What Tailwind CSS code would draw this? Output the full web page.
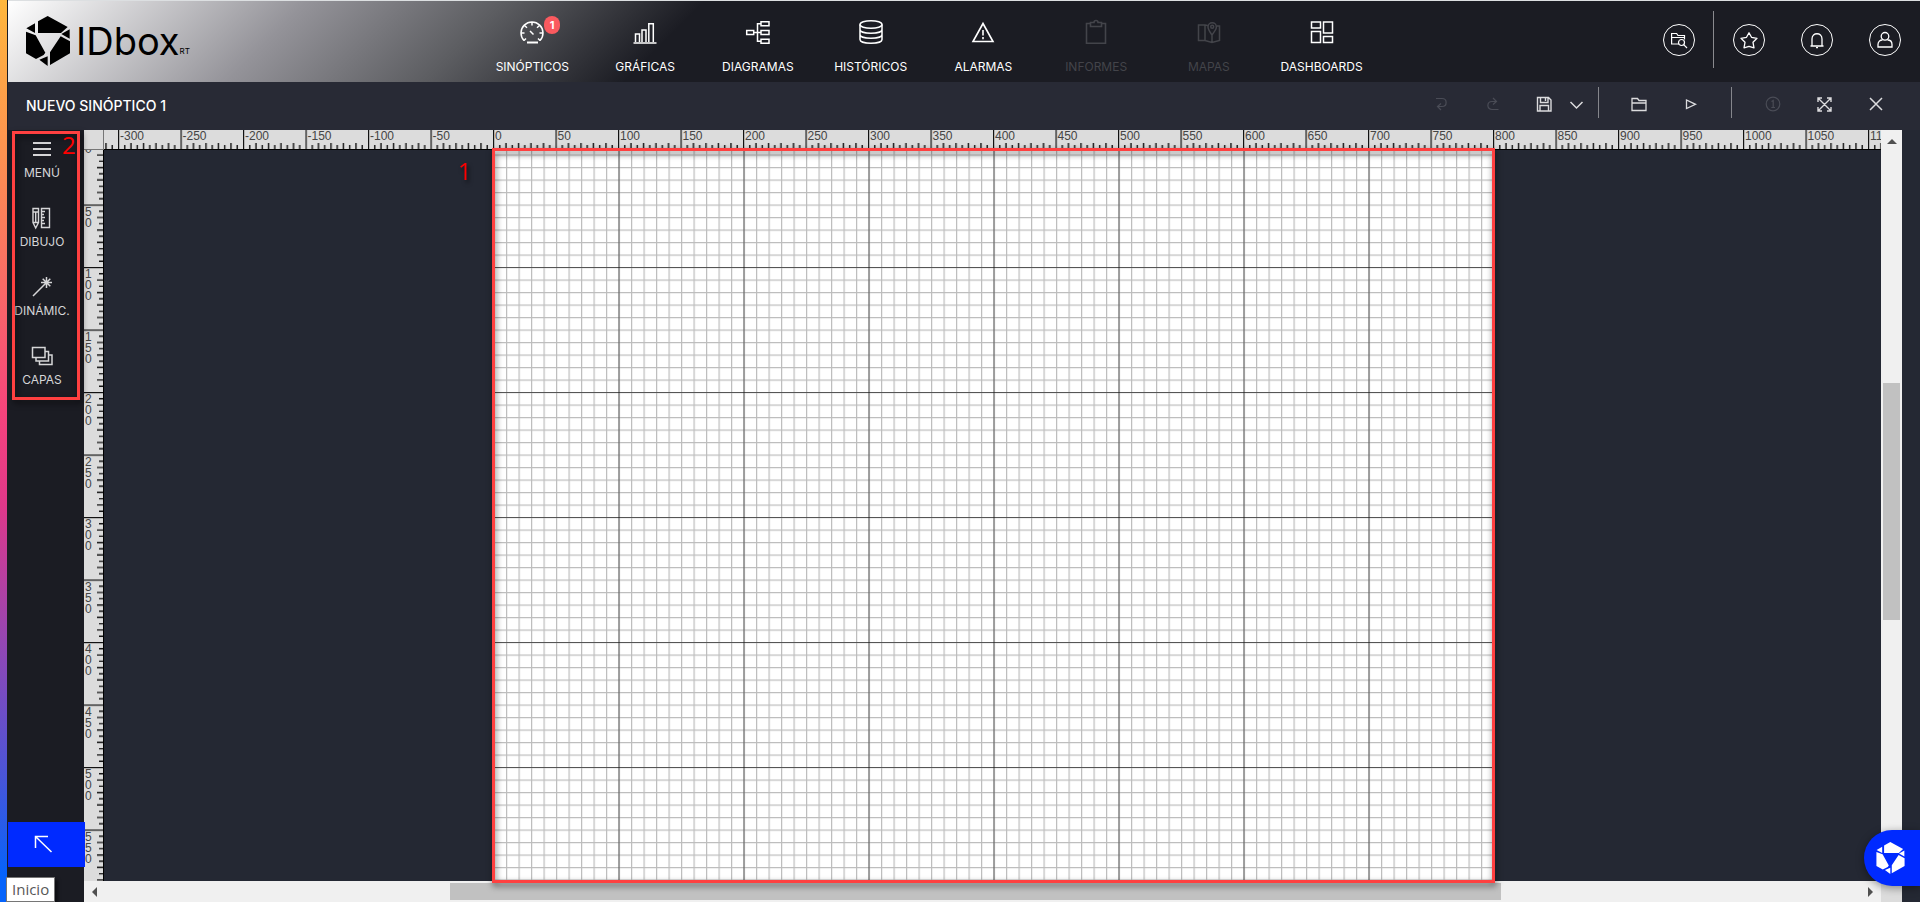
<!DOCTYPE html>
<html lang="es">
<head>
<meta charset="utf-8">
<title>IDbox RT - Nuevo sinóptico 1</title>
<script src="https://cdn.jsdelivr.net/npm/@tailwindcss/browser@4"></script>
</head>
<body class="flex h-screen overflow-hidden bg-[#242833] font-['Inter',sans-serif] text-white">
<svg class="hidden">
  <symbol id="logo" viewBox="78 51 132 150">
    <path fill="currentColor" d="M143 51 203 84 183 102H114V67ZM79 88 105 73V102ZM78 98 107 109 136 161 131 168 108 180 78 163ZM118 182 143 172V201ZM182 112 210 127V163L150 198V160ZM209 91V119L184 105Z"/>
  </symbol>
</svg>

<div class="w-2 shrink-0 border-r border-[#1b1c23] bg-[linear-gradient(180deg,#ffb73d_0%,#fd9250_17%,#f5437c_46%,#e0388a_56%,#9a45b0_70%,#4a55d8_86%,#0563fb_97%)]"></div>

<div class="flex min-w-0 flex-1 flex-col border-t border-[#dcdfe1]">
  <header class="flex h-[81px] shrink-0 bg-[linear-gradient(135deg,#fff_0%,#949399_15%,#5c5d61_25%,#1b1c23_35%)]">
    <a href="#" aria-label="IDbox RT" class="flex h-20 w-[468px] shrink-0 items-center pl-[18px] text-black">
      <svg class="h-[50px] w-11"><use href="#logo"/></svg>
      <span class="ml-[6px] text-[38px] leading-[50px]">IDbox</span><span class="mt-5 text-[8px]">RT</span>
    </a>
    <nav class="grid w-[902px] shrink-0 grid-cols-8 text-xs">
      <a href="#" class="relative flex flex-col items-center gap-3 pt-[18px]">
        <svg class="size-[26px]" viewBox="0 0 26 26" fill="none" stroke="currentColor" stroke-width="1.5"><path d="M5 21.500A11 11 0 1 1 21 21.500M13 2.500v4M2 14h3.500M24 14h-3.500M5.500 6.500l2.500 2.200M20.500 6.500 18 8.700M5 21.500l2-2M21 21.500l-2-2M11 12l3.500 3.500"/><path d="M8 23.500h11" stroke-width="2"/></svg>
        <span class="leading-5">SINÓPTICOS</span>
        <span class="absolute top-[15px] left-[68px] flex h-[18px] w-4 items-center justify-center rounded-full bg-[#fa5a5f] text-[11px] font-bold">1</span>
      </a>
      <a href="#" class="flex flex-col items-center gap-3 pt-[18px]">
        <svg class="size-[26px]" viewBox="0 0 26 26" fill="none" stroke="currentColor" stroke-width="1.5"><path d="M1.500 24h23M3.500 23v-8h4v8M10 23V11h4v12M16.800 23V4.700h4.500V23"/></svg>
        <span class="leading-5">GRÁFICAS</span>
      </a>
      <a href="#" class="flex flex-col items-center gap-3 pt-[18px]">
        <svg class="size-[26px]" viewBox="0 0 26 26" fill="none" stroke="currentColor" stroke-width="1.500"><path d="M1.700 11.500h7v4h-7zM16 2.800h8v4h-8zM16 11.500h8v4h-8zM16 20.200h8v4h-8zM8.700 13.500H16M16 4.800h-3.500v17.400H16"/></svg>
        <span class="leading-5">DIAGRAMAS</span>
      </a>
      <a href="#" class="flex flex-col items-center gap-3 pt-[18px]">
        <svg class="size-[26px]" viewBox="0 0 26 26" fill="none" stroke="currentColor" stroke-width="1.5"><ellipse cx="13" cy="5.500" rx="11" ry="3.800"/><path d="M2 5.500v15c0 5 22 5 22 0v-15M2 10.500c0 5 22 5 22 0M2 15.500c0 5 22 5 22 0"/></svg>
        <span class="leading-5">HISTÓRICOS</span>
      </a>
      <a href="#" class="flex flex-col items-center gap-3 pt-[18px]">
        <svg class="size-[26px]" viewBox="0 0 26 26" fill="none" stroke="currentColor" stroke-width="1.600"><path d="M13 4.500 23 22.500H3ZM13 11v5.500M13 18v2.200"/></svg>
        <span class="leading-5">ALARMAS</span>
      </a>
      <a href="#" aria-disabled="true" class="flex flex-col items-center gap-3 pt-[18px] text-[#43444a]">
        <svg class="size-[26px]" viewBox="0 0 26 26" fill="none" stroke="currentColor" stroke-width="1.600"><path d="M8 4.500H3.500v19.700h19V4.500H18M7.500 7.500v-4H11a2 2 0 0 1 4 0h3.500v4z"/></svg>
        <span class="leading-5">INFORMES</span>
      </a>
      <a href="#" aria-disabled="true" class="flex flex-col items-center gap-3 pt-[18px] text-[#43444a]">
        <svg class="size-[26px]" viewBox="0 0 26 26" fill="none" stroke="currentColor" stroke-width="1.500"><path d="M11.500 6.500 9 6H2.500v15.500H9l7 2 7.500-2V7H21M9 6v15.500M16 15v8.500M16 16c-2-3-4-5.500-4-8a4.200 4.200 0 0 1 8.400 0c0 2.500-2.400 5-4.400 8Z"/><circle cx="16.200" cy="7.700" r="1.500"/></svg>
        <span class="leading-5">MAPAS</span>
      </a>
      <a href="#" class="flex flex-col items-center gap-3 pt-[18px]">
        <svg class="size-[26px]" viewBox="0 0 26 26" fill="none" stroke="currentColor" stroke-width="1.500"><path d="M2.500 3h9v6h-9zM14.500 3h9v11h-9zM2.500 12.500h9v11h-9zM14.500 17.500h9v6h-9z"/></svg>
        <span class="leading-5">DASHBOARDS</span>
      </a>
    </nav>
    <div class="ml-auto flex h-[77px] items-center pr-[19px]">
      <button aria-label="Explorar" class="flex size-8 items-center justify-center rounded-full border border-white">
        <svg class="size-[18px]" viewBox="0 0 18 18" fill="none" stroke="currentColor" stroke-width="1.200"><path d="M9 13H1.600V2.500h5L8 4.500h6.500v4M1.600 6.500h13"/><circle cx="11.500" cy="11.500" r="3"/><path d="m13.700 13.700 3.300 3.300"/></svg>
      </button>
      <span class="ml-[18px] h-[57px] w-px bg-[#8a8a8e]"></span>
      <button aria-label="Favoritos" class="ml-[19px] flex size-8 items-center justify-center rounded-full border border-white">
        <svg class="size-[18px]" viewBox="0 0 18 18" fill="none" stroke="currentColor" stroke-width="1.300" stroke-linejoin="round"><path d="m9 1.800 2.500 4.500 5.500 1-4 4 1 5.500-5-1.500-5 1.500 1-5.500-4-4 5.500-1Z"/></svg>
      </button>
      <button aria-label="Notificaciones" class="ml-9 flex size-8 items-center justify-center rounded-full border border-white">
        <svg class="size-[18px]" viewBox="0 0 18 18" fill="none" stroke="currentColor" stroke-width="1.300"><path d="M2.500 15h13M4 15V8c0-7 10-7 10 0v7"/><path d="M8 16.600h2"/></svg>
      </button>
      <button aria-label="Usuario" class="ml-9 flex size-8 items-center justify-center rounded-full border border-white">
        <svg class="size-[18px]" viewBox="0 0 18 18" fill="none" stroke="currentColor" stroke-width="1.300"><circle cx="9" cy="5.300" r="3.800"/><path d="M6.500 9C4 9 2 10.500 2 13.500V16h14v-2.500C16 10.500 14 9 11.500 9"/></svg>
      </button>
    </div>
  </header>

  <div class="flex h-12 shrink-0 items-center bg-[#282a35] pr-[34px] pl-[18px] text-[#dcdcde]">
    <h1 class="mr-auto text-sm font-medium text-white">NUEVO SINÓPTICO 1</h1>
    <div class="flex h-full items-center pb-1">
      <button aria-label="Deshacer" class="text-[#4a4c56]"><svg class="size-5" viewBox="0 0 20 20" fill="none" stroke="currentColor" stroke-width="1.200"><path d="M5 4.500h6c5.500 0 5.500 8 0 8H7M10 9.500l-3.500 3 3.500 3.500"/></svg></button>
      <button aria-label="Rehacer" class="ml-8 text-[#4a4c56]"><svg class="size-5" viewBox="0 0 20 20" fill="none" stroke="currentColor" stroke-width="1.200"><path d="M15.500 15.500H9c-5.500 0-5.500-8 0-8h4M10 4l3.500 3.500-3.500 3"/></svg></button>
      <button aria-label="Guardar" class="ml-[31px]"><svg class="size-5" viewBox="0 0 20 20" fill="none" stroke="currentColor" stroke-width="1.400"><path d="M3.500 3.500h11L17 6v11H3.500zM6.500 3.500v5h7.500v-5M11.500 4v3M6 17v-5.500h8.500V17"/></svg></button>
      <button aria-label="Opciones de guardado" class="ml-3"><svg class="size-5" viewBox="0 0 20 20" fill="none" stroke="currentColor" stroke-width="1.500"><path d="m4.500 8 6 6 6-6"/></svg></button>
      <span class="mb-1 ml-3 h-[31px] w-px bg-[#85868c]"></span>
      <button aria-label="Abrir" class="ml-[30px]"><svg class="size-5" viewBox="0 0 20 20" fill="none" stroke="currentColor" stroke-width="1.300"><path d="M3 16.500v-12h5.500L10 6.500h7v10zM3 9h14"/></svg></button>
      <button aria-label="Ejecutar" class="ml-8"><svg class="size-5" viewBox="0 0 20 20" fill="none" stroke="currentColor" stroke-width="1.300"><path d="M5.500 6v8.500l9-4.200Z"/></svg></button>
      <span class="mb-1 ml-[30px] h-[31px] w-px bg-[#85868c]"></span>
      <button aria-label="Información" class="ml-[31px] text-[#4a4c56]"><svg class="size-5" viewBox="0 0 20 20" fill="none" stroke="currentColor" stroke-width="1.200"><circle cx="10" cy="10" r="6.800"/><path d="M8.500 7.500l1.700-1v7M8.300 13.500h3.700"/></svg></button>
      <button aria-label="Pantalla completa" class="ml-[31px]"><svg class="size-5" viewBox="0 0 20 20" fill="none" stroke="currentColor" stroke-width="1.400"><path d="m4.500 4.500 12 12M16.500 4.500l-12 12M4 8V4h4M13 4h4v4M17 13v4h-4M8 17H4v-4"/></svg></button>
      <button aria-label="Cerrar" class="ml-8"><svg class="size-5" viewBox="0 0 20 20" fill="none" stroke="currentColor" stroke-width="1.500"><path d="m4 4 12 12M16 4 4 16"/></svg></button>
    </div>
  </div>

  <div class="flex min-h-0 flex-1">
    <aside class="relative flex w-[76px] shrink-0 flex-col bg-[#1b1c23] text-xs text-[#d6d6d8]">
      <button class="flex h-[69px] w-[68px] flex-col items-center gap-1 pt-[7px]">
        <svg class="size-6" viewBox="0 0 24 24" stroke="currentColor" stroke-width="2"><path d="M3 6h18M3 12h18M3 18h18"/></svg>
        <span class="leading-4">MENÚ</span>
      </button>
      <button class="flex h-[69px] w-[68px] flex-col items-center gap-1 pt-[7px]">
        <svg class="size-6" viewBox="0 0 24 24" fill="none" stroke="currentColor" stroke-width="1.400"><path d="M3 2.500h5.500v14L5.700 22 3 16.500zM3 6h5.500M3 16.500h5.500M5.700 6v10.500M11.500 2.500h8v19h-8zM12 5.500h3M12 8.500h2M12 11.500h3M12 14.500h2M12 17.500h3"/></svg>
        <span class="leading-4">DIBUJO</span>
      </button>
      <button class="flex h-[69px] w-[68px] flex-col items-center gap-1 pt-[7px]">
        <svg class="size-6" viewBox="0 0 24 24" fill="none" stroke="currentColor" stroke-width="1.500"><path d="M3 21 15 9M16.500 2v11M11 7.500h11M12.700 3.700l7.600 7.600M20.300 3.700 15 9"/></svg>
        <span class="leading-4 whitespace-nowrap">DINÁMIC.</span>
      </button>
      <button class="flex h-[69px] w-[68px] flex-col items-center gap-1 pt-[7px]">
        <svg class="size-6" viewBox="0 0 24 24" fill="none" stroke="currentColor" stroke-width="1.500"><path d="M2.500 3.500h12.500v10H2.500zM15 7.500h3.500v9.500H6v-3M18.500 11H22v9.500H9.500V17"/></svg>
        <span class="leading-4">CAPAS</span>
      </button>
      <button aria-label="Volver" class="z-10 mt-auto mb-[35px] flex h-[45px] w-[77px] items-center justify-center bg-[#002aff] pr-2 text-white">
        <svg class="size-6" viewBox="0 0 24 24" fill="none" stroke="currentColor" stroke-width="1.500"><path d="M4.500 15V3.500H17M4.500 3.500l16 15.500"/></svg>
      </button>
      <div class="pointer-events-none absolute top-px left-1 h-[269px] w-[68px] border-3 border-[#ff4040] drop-shadow-[2px_3px_3px_rgba(0,0,0,0.6)]"></div>
      <span class="absolute top-[2px] left-[54px] font-['Open_Sans',sans-serif] text-2xl leading-[26px] text-[#f00]">2</span>
      <div role="tooltip" class="absolute bottom-0 -left-[2px] z-20 border border-[#767676] bg-white px-[5px] font-['Open_Sans',sans-serif] text-[15px] leading-[23px] text-[#575757] shadow-[3px_3px_3px_rgba(0,0,0,0.5)]">Inicio</div>
    </aside>

    <main class="grid min-w-0 flex-1 grid-cols-[20px_minmax(0,1fr)_21px] grid-rows-[20px_minmax(0,1fr)_21px] pr-[18px]">
      <div class="border-r border-b border-r-[#777] border-b-[#777] bg-[#dcdcdc]"></div>
      <svg id="ruler-x" class="h-5 w-full bg-[#dcdcdc] font-['Liberation_Sans',sans-serif] text-xs">
        <defs><pattern id="ticks-x" x="389" width="62.500" height="20" patternUnits="userSpaceOnUse">
          <path d="M.600 0v20" stroke="#111" stroke-width="1.200"/><path d="M6.750 15v5M19.250 15v5M31.750 15v5M44.250 15v5M56.750 15v5M13 13v7M25.500 13v7M38 13v7M50.500 13v7" stroke="#111" stroke-width="1.400"/>
        </pattern></defs>
        <rect width="100%" height="20" fill="url(#ticks-x)"/><path d="M0 19.500h4000" stroke="#000"/>
      </svg>
      <div class="row-span-2 flex flex-col items-center bg-[#f0f0f0] pt-[9px]">
        <svg class="h-[5px] w-[10px]" viewBox="0 0 10 5"><path d="m5 0 5 5H0z" fill="#505050"/></svg>
        <div class="mt-[239px] h-[237px] w-[17px] bg-[#c1c1c1]"></div>
      </div>
      <svg id="ruler-y" class="h-full w-5 bg-[#dcdcdc] font-['Liberation_Sans',sans-serif] text-xs">
        <defs><pattern id="ticks-y" y="-8" width="20" height="62.500" patternUnits="userSpaceOnUse">
          <path d="M0 .600h20" stroke="#111" stroke-width="1.200"/><path d="M15 6.750h5M15 19.250h5M15 31.750h5M15 44.250h5M15 56.750h5M13 13h7M13 25.500h7M13 38h7M13 50.500h7" stroke="#111" stroke-width="1.400"/>
        </pattern></defs>
        <rect width="20" height="100%" fill="url(#ticks-y)"/><path d="M19.500 0v4000" stroke="#000"/>
      </svg>
      <div class="flex min-w-0 bg-[#242833]">
        <span class="w-[389px] shrink-0 pt-2 pl-[354px] font-['Open_Sans',sans-serif] text-2xl leading-[26px] text-[#f00] drop-shadow-[2px_3px_2px_rgba(0,0,0,0.6)]">1</span>
        <div class="relative z-10 w-[1001px] shrink-0">
          <svg class="h-full w-full bg-white">
            <defs>
              <pattern id="minor" x=".5" y="-8" width="12.500" height="12.500" patternUnits="userSpaceOnUse"><path d="M.600 0v12.500M0 .600h12.500" stroke="#000" stroke-width="1.200" stroke-opacity=".26"/></pattern>
              <pattern id="major" x=".5" y="-8" width="125" height="125" patternUnits="userSpaceOnUse"><path d="M.5 0v125M0 .5h125" stroke="#000" stroke-opacity=".55"/></pattern>
            </defs>
            <rect width="100%" height="100%" fill="url(#minor)"/><rect width="100%" height="100%" fill="url(#major)"/>
          </svg>
          <div class="pointer-events-none absolute -top-[2px] -right-px -bottom-[2px] -left-px border-3 border-[#ff4040] drop-shadow-[1px_3px_3px_rgba(0,0,0,0.6)]"></div>
        </div>
      </div>
      <div class="col-span-2 flex items-center bg-[#f0f0f0]">
        <svg class="ml-2 h-[10px] w-[5px]" viewBox="0 0 5 10"><path d="M5 0v10L0 5z" fill="#505050"/></svg>
        <div class="ml-[353px] h-[17px] w-[1051px] bg-[#c1c1c1]"></div>
        <svg class="mr-2 ml-auto h-[10px] w-[5px]" viewBox="0 0 5 10"><path d="M0 0v10l5-5z" fill="#505050"/></svg>
      </div>
      <div class="bg-[#dcdcdc]"></div>
    </main>
  </div>
</div>

<button aria-label="Asistente IDbox" class="fixed right-0 bottom-4 z-30 flex h-14 w-14 items-center rounded-l-full bg-[#002aff] pl-3 text-white shadow-[0_2px_8px_rgba(0,0,0,0.4)]">
  <svg class="h-8 w-[29px]"><use href="#logo"/></svg>
</button>

<script>
  // Ruler labels: one every 50 canvas units, 1.25 px per unit.
  const label = (parent, x, y, text) => {
    const t = document.createElementNS('http://www.w3.org/2000/svg', 'text');
    t.setAttribute('x', x);
    t.setAttribute('y', y);
    t.setAttribute('fill', '#444');
    t.textContent = text;
    parent.append(t);
    return t;
  };
  const rulerX = document.getElementById('ruler-x');
  const rulerY = document.getElementById('ruler-y');
  for (let u = -300; u <= 1100; u += 50) label(rulerX, 391 + u * 1.25, 10, u);
  for (let u = 0; u <= 550; u += 50) {
    [...String(u)].forEach((digit, i) => label(rulerY, 1, u * 1.25 + 3 + i * 11, digit));
  }
</script>
</body>
</html>
